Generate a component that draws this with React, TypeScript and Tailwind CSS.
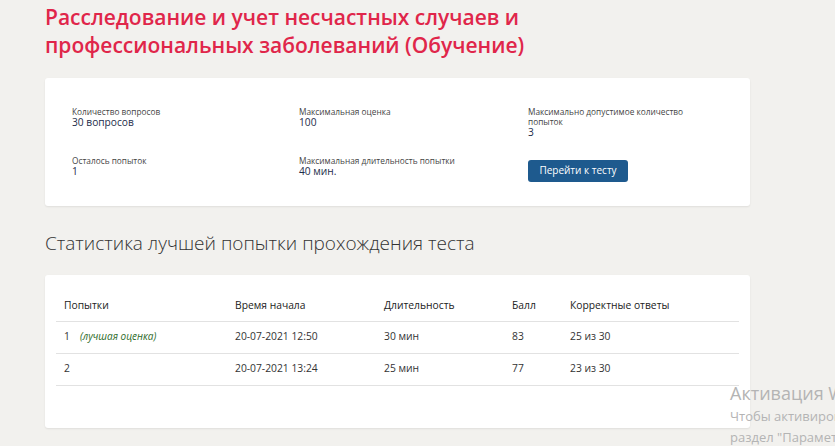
const info = [
  { label: "Количество вопросов", value: "30 вопросов" },
  { label: "Максимальная оценка", value: "100" },
  { label: "Максимально допустимое количество попыток", value: "3" },
];

const attempts = [
  { n: "1", best: true, start: "20-07-2021 12:50", dur: "30 мин", score: "83", correct: "25 из 30" },
  { n: "2", best: false, start: "20-07-2021 13:24", dur: "25 мин", score: "77", correct: "23 из 30" },
];

function Field({ label, value }: { label: string; value: string }) {
  return (
    <div className="flex flex-col">
      <span className="text-[8.3px] leading-[10px] text-[#444] w-[165px]">{label}</span>
      <span className="text-[10.2px] leading-[11px] text-[#1d2d4a]">{value}</span>
    </div>
  );
}

export default function App() {
  return (
    <div
      className="relative w-[835px] h-[446px] overflow-hidden bg-[#f2f1ee] px-[45px] pt-[3px]"
      style={{ fontFamily: '"Open Sans", "Noto Sans", sans-serif' }}
    >
      <h1 className="text-[21px] leading-[28px] font-semibold text-[#e0264a] w-[520px]">
        Расследование и учет несчастных случаев и профессиональных заболеваний (Обучение)
      </h1>

      <div className="mt-[19px] w-[705px] h-[128px] bg-white rounded-[3px] shadow-[0_1px_2px_rgba(0,0,0,0.08)] pl-[27px] pt-[29px]">
        <div className="grid grid-cols-[227px_229px_200px] gap-y-[18px] items-start">
          {info.map((f) => (
            <Field key={f.label} label={f.label} value={f.value} />
          ))}
          <Field label="Осталось попыток" value="1" />
          <Field label="Максимальная длительность попытки" value="40 мин." />
          <div>
            <button className="w-[100px] h-[22px] rounded-[3px] bg-[#1e5a8e] text-white text-[10px]">
              Перейти к тесту
            </button>
          </div>
        </div>
      </div>

      <h2 className="mt-[24px] text-[19px] leading-[27px] font-light text-[#333]">
        Статистика лучшей попытки прохождения теста
      </h2>

      <div className="mt-[18px] w-[705px] h-[153px] bg-white rounded-[3px] shadow-[0_1px_2px_rgba(0,0,0,0.08)] px-[11px] pt-[11px]">
        <table className="w-[683px] text-[10.3px] text-[#333] border-collapse">
          <thead>
            <tr className="h-[35px] border-b border-[#e2e2e2] text-left">
              <th className="w-[171px] px-2 pb-[7px] align-bottom font-normal text-[#222]">Попытки</th>
              <th className="w-[149px] px-2 pb-[7px] align-bottom font-normal text-[#222]">Время начала</th>
              <th className="w-[128px] px-2 pb-[7px] align-bottom font-normal text-[#222]">Длительность</th>
              <th className="w-[58px] px-2 pb-[7px] align-bottom font-normal text-[#222]">Балл</th>
              <th className="px-2 pb-[7px] align-bottom font-normal text-[#222]">Корректные ответы</th>
            </tr>
          </thead>
          <tbody>
            {attempts.map((a) => (
              <tr key={a.n} className="h-[32px] border-b border-[#e2e2e2]">
                <td className="px-2">
                  {a.n}
                  {a.best && <i className="ml-[10px] text-[10px] text-[#2e6b2a]">(лучшая оценка)</i>}
                </td>
                <td className="px-2">{a.start}</td>
                <td className="px-2">{a.dur}</td>
                <td className="px-2">{a.score}</td>
                <td className="px-2">{a.correct}</td>
              </tr>
            ))}
          </tbody>
        </table>
      </div>

      <div className="absolute left-[730px] top-[381px] whitespace-nowrap text-[#b4b4b4]">
        <div className="text-[18px] leading-[25px]">Активация Windows</div>
        <div className="text-[13px] leading-[21px]">Чтобы активировать Windows, перейдите в</div>
        <div className="text-[13px] leading-[21px]">раздел "Параметры".</div>
      </div>
    </div>
  );
}
